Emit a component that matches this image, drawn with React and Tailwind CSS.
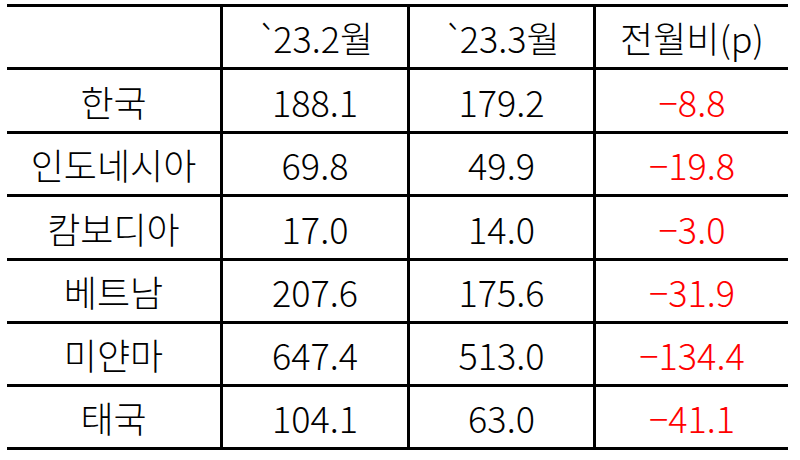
const rows = [
  ["한국", "188.1", "179.2", "−8.8"],
  ["인도네시아", "69.8", "49.9", "−19.8"],
  ["캄보디아", "17.0", "14.0", "−3.0"],
  ["베트남", "207.6", "175.6", "−31.9"],
  ["미얀마", "647.4", "513.0", "−134.4"],
  ["태국", "104.1", "63.0", "−41.1"],
];

// content heights between the 3px rules
const heights = ["h-[63px]", "h-[64px]", "h-[63px]", "h-[64px]", "h-[63px]", "h-[63px]", "h-[63px]"];

function Month({ label }) {
  return (
    <span>
      <span className="tracking-[-5px]">`</span>
      {label}
    </span>
  );
}

function Row({ cells, h, header }) {
  return (
    <div className={`flex ${h} border-b-[3px] border-black`}>
      <div className="w-[213px] flex items-center justify-center">{cells[0]}</div>
      <div className="w-[187px] border-l-[3px] border-black flex items-center justify-center">{cells[1]}</div>
      <div className="w-[186px] border-l-[3px] border-black flex items-center justify-center">{cells[2]}</div>
      <div
        className={`w-[195px] border-l-[3px] border-black flex items-center justify-center ${
          header ? "text-black" : "text-[#ff0000]"
        }`}
      >
        {cells[3]}
      </div>
    </div>
  );
}

export default function App() {
  return (
    <div
      className="w-[800px] h-[460px] bg-white pt-[4px] pl-[7px] text-black text-[36px] font-light leading-none"
      style={{ fontFamily: '"Noto Sans CJK KR", "Noto Sans", sans-serif' }}
    >
      <div className="w-[781px] border-t-[3px] border-black">
        <Row cells={["", <Month label="23.2월" />, <Month label="23.3월" />, "전월비(p)"]} h={heights[0]} header />
        {rows.map((r, i) => (
          <Row key={r[0]} cells={r} h={heights[i + 1]} />
        ))}
      </div>
    </div>
  );
}
